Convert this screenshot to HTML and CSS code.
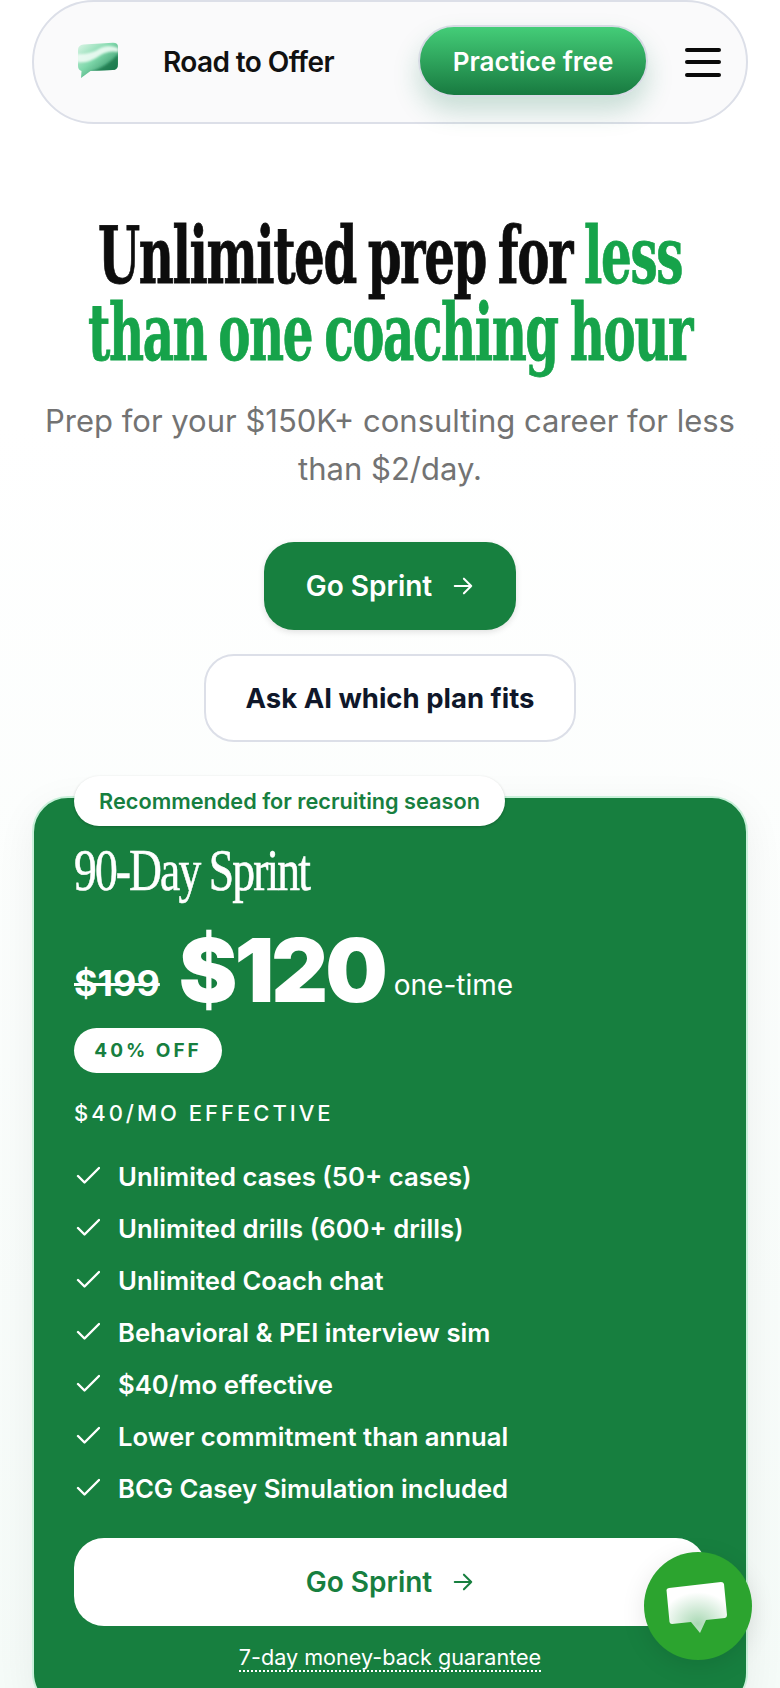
FILE: index.html
```html
<!DOCTYPE html>
<html lang="en">
<head>
<meta charset="utf-8">
<title>Road to Offer pricing</title>
<link rel="stylesheet" href="styles.css">
</head>
<body>
<header class="nav">
  <a class="brand">
    <svg class="brand-logo" viewBox="0 0 42 36" aria-hidden="true">
      <defs>
        <linearGradient id="lg1" x1="0" y1="0" x2="1" y2="1"><stop offset="0" stop-color="#e4f8ec"/><stop offset="0.45" stop-color="#7fd8ab"/><stop offset="1" stop-color="#137347"/></linearGradient>
        <filter id="soft"><feGaussianBlur stdDeviation=".8"/></filter>
        <clipPath id="lc"><path d="M7 2.5 L36 .8 Q41.500 .5 41.500 5 L41.500 22 Q41.500 28 36 28 L14 29 L4.500 36 L5 29 Q1.500 28 1.500 24 L1.500 8 Q1.500 3 7 2.500Z"/></clipPath>
      </defs>
      <g clip-path="url(#lc)">
        <rect width="42" height="36" fill="url(#lg1)"/>
        <path d="M0 12 Q14 13 24 6 Q32 2 42 6 L42 10 Q32 8 24 13 Q12 22 0 20Z" fill="#f4fdf8" opacity=".85" filter="url(#soft)"/>
        <path d="M14 30 Q30 25 42 12 L42 30Z" fill="#137347" opacity=".75" filter="url(#soft)"/>
      </g>
    </svg>
    <span class="brand-name">Road to Offer</span>
  </a>
  <a class="nav-cta">Practice free</a>
  <span class="burger"><i></i><i></i><i></i></span>
</header>

<section class="hero">
  <h1 class="hero-title">Unlimited prep for <em>less<br>than one coaching hour</em></h1>
  <p class="hero-sub">Prep for your $150K+ consulting career for less than $2/day.</p>
  <a class="btn btn-primary">Go Sprint
    <svg class="arrow" viewBox="0 0 24 24" aria-hidden="true"><path d="M3 12h18M13 4l8 8-8 8"/></svg>
  </a>
  <a class="btn btn-ghost">Ask AI which plan fits</a>
</section>

<section class="card">
  <div class="ribbon">Recommended for recruiting season</div>
  <h2 class="plan">90-Day Sprint</h2>
  <div class="price-row">
    <s class="old">$199</s>
    <span class="now">$120</span>
    <span class="term">one-time</span>
  </div>
  <div class="off">40% OFF</div>
  <div class="effective">$40/MO EFFECTIVE</div>
  <ul class="features">
    <li><svg class="check" viewBox="0 0 26 26" aria-hidden="true"><path d="M4 14l6.500 6.500L25 6"/></svg>Unlimited cases (50+ cases)</li>
    <li><svg class="check" viewBox="0 0 26 26" aria-hidden="true"><path d="M4 14l6.500 6.500L25 6"/></svg>Unlimited drills (600+ drills)</li>
    <li><svg class="check" viewBox="0 0 26 26" aria-hidden="true"><path d="M4 14l6.500 6.500L25 6"/></svg>Unlimited Coach chat</li>
    <li><svg class="check" viewBox="0 0 26 26" aria-hidden="true"><path d="M4 14l6.500 6.500L25 6"/></svg>Behavioral &amp; PEI interview sim</li>
    <li><svg class="check" viewBox="0 0 26 26" aria-hidden="true"><path d="M4 14l6.500 6.500L25 6"/></svg>$40/mo effective</li>
    <li><svg class="check" viewBox="0 0 26 26" aria-hidden="true"><path d="M4 14l6.500 6.500L25 6"/></svg>Lower commitment than annual</li>
    <li><svg class="check" viewBox="0 0 26 26" aria-hidden="true"><path d="M4 14l6.500 6.500L25 6"/></svg>BCG Casey Simulation included</li>
  </ul>
  <a class="btn btn-white">Go Sprint
    <svg class="arrow" viewBox="0 0 24 24" aria-hidden="true"><path d="M3 12h18M13 4l8 8-8 8"/></svg>
  </a>
  <p class="guarantee"><span>7-day money-back guarantee</span></p>
</section>

<button class="fab" aria-label="Open chat">
  <svg viewBox="0 0 108 108" aria-hidden="true">
    <defs>
      <radialGradient id="fg" cx="0.52" cy="0.82" r="0.62"><stop offset="0" stop-color="#a9d8b4"/><stop offset="1" stop-color="#ffffff"/></radialGradient>
    </defs>
    <path d="M25 36 L77 30 Q79.500 30 80 32 L83 63 Q83 65.500 81 66 L62 68 L56 81 L47 70 L28 72 Q26 72 25.500 70 L22.500 38 Q22.500 36.500 25 36Z" fill="url(#fg)"/>
  </svg>
</button>
</body>
</html>
```
FILE: styles.css
```css
* { box-sizing: border-box; }
html, body { margin: 0; padding: 0; }
html { height: 1688px; overflow: hidden; }
body {
  height: 1688px;
  overflow: hidden;
  padding: 0 32px;
  background: linear-gradient(#ffffff 0, #ffffff 25%, #f5fbf8 100%);
  font-family: "Inter", "Liberation Sans", sans-serif;
  color: #0f172a;
}

.nav {
  height: 124px;
  display: flex;
  align-items: center;
  padding: 0 25px 0 42px;
  background: #fafafb;
  border: 2px solid #dcdfe8;
  border-radius: 62px;
}
.brand { display: flex; align-items: center; gap: 44px; flex: 1; }
.brand-logo { width: 43px; height: 36px; margin-top: -4px; }
.brand-name { font-size: 28px; font-weight: 600; letter-spacing: -.6px; color: #111; }
.nav-cta {
  width: 230px;
  height: 72px;
  margin-right: 37px;
  margin-top: -2px;
  display: flex;
  align-items: center;
  justify-content: center;
  color: #fff;
  font-size: 26px;
  font-weight: 600;
  border: 2px solid #d7dbe4;
  border-radius: 36px;
  background: linear-gradient(#44cd78, #187a40);
  box-shadow: 0 14px 26px rgba(24, 122, 80, .22);
}
.burger { width: 36px; display: flex; flex-direction: column; gap: 8.500px; }
.burger i { display: block; height: 4px; border-radius: 2px; background: #0a0a0a; }

.hero { display: flex; flex-direction: column; align-items: center; text-align: center; }
.hero-title {
  margin: 93px 0 0;
  white-space: nowrap;
  font-family: "DejaVu Serif Condensed", "DejaVu Serif", serif;
  font-stretch: condensed;
  font-weight: 700;
  font-size: 78px;
  line-height: 77px;
  letter-spacing: -2px;
  word-spacing: -5px;
  color: #0d0d0d;
  transform: scaleX(.688);
  -webkit-text-stroke: .8px currentColor;
}
.hero-title em { font-style: normal; color: #16a34a; }
.hero-sub {
  margin: 26px 0 0;
  font-size: 31px;
  font-weight: 400;
  line-height: 48px;
  color: #737373;
}
.btn {
  display: flex;
  align-items: center;
  justify-content: center;
  gap: 20px;
  height: 88px;
  border-radius: 30px;
  font-size: 28px;
  font-weight: 600;
}
.arrow { width: 22px; height: 22px; fill: none; stroke: currentColor; stroke-width: 2.200; stroke-linecap: round; stroke-linejoin: round; }
.btn-primary {
  width: 252px;
  margin-top: 49px;
  background: #17803f;
  color: #fff;
  box-shadow: 0 2px 6px rgba(0, 0, 0, .12);
}
.btn-ghost {
  width: 372px;
  margin-top: 24px;
  background: #fff;
  border: 2px solid #dcdfe8;
  font-size: 27.500px;
  font-weight: 700;
  color: #0f172a;
}

.card {
  position: relative;
  margin-top: 54px;
  height: 913px;
  padding: 0 40px;
  background: #177f3f;
  border: 2px solid #c9f0da;
  border-radius: 36px;
  color: #fff;
  box-shadow: 0 10px 40px rgba(0, 0, 0, .06);
}
.ribbon {
  position: absolute;
  left: 40px;
  top: -22px;
  width: 431px;
  height: 50px;
  display: flex;
  align-items: center;
  justify-content: center;
  background: #fff;
  border-radius: 25px;
  color: #177f3f;
  font-size: 21.700px;
  font-weight: 600;
  box-shadow: 0 1px 3px rgba(0, 0, 0, .2);
}
.plan {
  margin: 0;
  padding-top: 42px;
  font-family: "Liberation Serif", serif;
  font-weight: 400;
  font-size: 60px;
  line-height: 60px;
  letter-spacing: -2.500px;
  transform: scaleX(.76);
  transform-origin: left center;
  -webkit-text-stroke: .6px currentColor;
  white-space: nowrap;
}
.price-row { display: flex; align-items: flex-end; margin-top: 16px; height: 100px; }
.old { font-size: 36px; line-height: 36px; font-weight: 700; margin: 0 19px 15px 0; }
.now { font-size: 88px; font-weight: 900; letter-spacing: -3px; margin: 0 9px -4px 0; line-height: 100px; }
.term { font-size: 28px; line-height: 28px; font-weight: 400; margin-bottom: 17px; }
.off {
  width: 148px;
  height: 45px;
  margin-top: 12px;
  display: flex;
  align-items: center;
  justify-content: center;
  background: #fff;
  border-radius: 23px;
  color: #177f3f;
  font-size: 19px;
  font-weight: 700;
  letter-spacing: 3px;
}
.effective { margin-top: 23px; font-size: 22px; line-height: 34px; font-weight: 500; letter-spacing: 3px; }
.features { list-style: none; margin: 20px 0 0; padding: 0; }
.features li { display: flex; align-items: center; gap: 18px; height: 52px; font-size: 25.700px; font-weight: 600; }
.check { width: 26px; height: 26px; margin-top: -3px; fill: none; stroke: #fff; stroke-width: 2.400; stroke-linecap: round; stroke-linejoin: round; }
.btn-white { margin-top: 24px; background: #fff; color: #177f3f; }
.guarantee { margin: 16px 0 0; text-align: center; font-size: 21.600px; line-height: 30px; }
.guarantee span { border-bottom: 2px dotted #fff; }

.fab {
  position: fixed;
  left: 644px;
  top: 1552px;
  width: 108px;
  height: 108px;
  padding: 0;
  border: 0;
  border-radius: 50%;
  background: #2ca42f;
  box-shadow: 0 6px 24px rgba(0, 0, 0, .1);
}
.fab svg { display: block; width: 108px; height: 108px; }
```
